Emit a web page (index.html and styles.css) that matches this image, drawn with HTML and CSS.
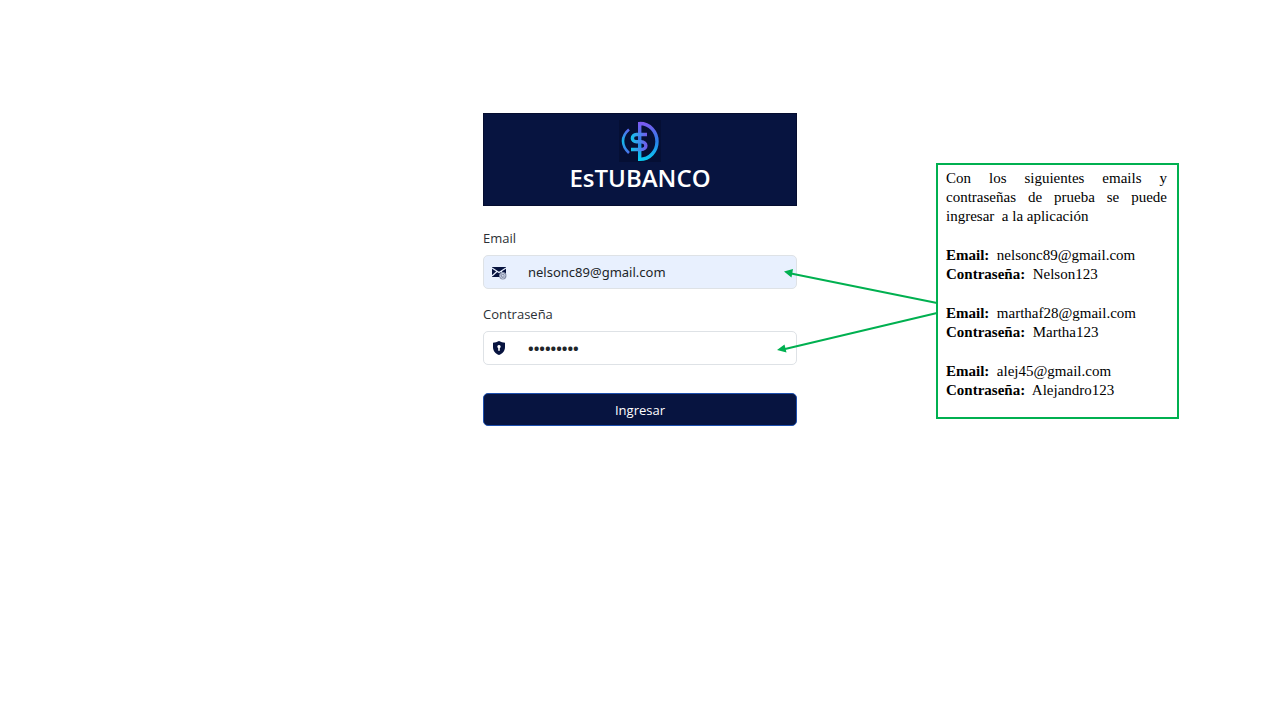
FILE: index.html
```html
<!DOCTYPE html>
<html lang="es">
<head>
<meta charset="utf-8">
<meta name="viewport" content="width=device-width, initial-scale=1">
<title>EsTUBANCO</title>
<link rel="stylesheet" href="styles.css">
</head>
<body>
<main class="page">
  <form class="login">
    <header class="brand">
      <svg class="brand-logo" viewBox="0 0 42 42" aria-hidden="true">
        <defs>
          <linearGradient id="ring" gradientUnits="userSpaceOnUse" x1="0" y1="2" x2="0" y2="41">
            <stop offset="0" stop-color="#8058f0"/>
            <stop offset="0.5" stop-color="#2a80e8"/>
            <stop offset="1" stop-color="#08d0f4"/>
          </linearGradient>
          <linearGradient id="arc" gradientUnits="userSpaceOnUse" x1="0" y1="10" x2="0" y2="33">
            <stop offset="0" stop-color="#5868f0"/>
            <stop offset="0.5" stop-color="#12b8e8"/>
            <stop offset="1" stop-color="#4a70ea"/>
          </linearGradient>
          <linearGradient id="ess" gradientUnits="userSpaceOnUse" x1="12" y1="0" x2="28" y2="0">
            <stop offset="0" stop-color="#10c4ec"/>
            <stop offset="1" stop-color="#7458ec"/>
          </linearGradient>
        </defs>
        <rect width="42" height="42" fill="#050f34"/>
        <g fill="none">
          <path d="M10 9.500Q4 14.500 4 21T10 33" stroke="url(#arc)" stroke-width="2.600"/>
          <path d="M20.700 2V39.400C31 39.400 38 31 38 21.500S31 3.500 20.700 3.500" stroke="url(#ring)" stroke-width="3.400"/>
          <path d="M28 14.500H17.500C12 14.500 12 21.800 17.500 21.800H22C28.500 21.800 28.500 29.500 22 29.500H12" stroke="url(#ess)" stroke-width="3.400"/>
        </g>
      </svg>
      <h1 class="brand-name">EsTUBANCO</h1>
    </header>

    <div class="field">
      <label class="field-label" for="email">Email</label>
      <div class="field-box field-box-filled">
        <svg class="field-icon" viewBox="0 0 16 16" aria-hidden="true">
          <path d="M1 3H15V13H1Z" fill="#07133f"/>
          <path d="M1 4L8 8.500L15 4M1 12L6 7.500M15 12L10 7.500" fill="none" stroke="#e8f0fe" stroke-width="1.200"/>
          <circle cx="11.800" cy="11.800" r="3.700" fill="#8790aa"/>
          <path d="M13.500 13.500A2.400 2.400 0 1 1 14 11C14 13 12.500 12.800 12.800 11.700" fill="none" stroke="#d6deef" stroke-width="0.800"/>
          <circle cx="11.700" cy="11.700" r="0.900" fill="#d6deef"/>
        </svg>
        <input class="field-input" id="email" type="email" value="nelsonc89@gmail.com" autocomplete="off">
      </div>
    </div>

    <div class="field">
      <label class="field-label" for="password">Contraseña</label>
      <div class="field-box">
        <svg class="field-icon" viewBox="0 0 16 16" aria-hidden="true">
          <path d="M8 1C6 2 4 2.600 2 2.800V7C2 11 4.500 13.600 8 15C11.500 13.600 14 11 14 7V2.800C12 2.600 10 2 8 1Z" fill="#07133f"/>
          <path d="M8 5A1.700 1.700 0 0 1 8.800 8.200V10.800H7.200V8.200A1.700 1.700 0 0 1 8 5Z" fill="#fff"/>
        </svg>
        <input class="field-input field-input-password" id="password" type="password" value="Nelson123" autocomplete="off">
      </div>
    </div>

    <button class="submit" type="submit">Ingresar</button>

    <svg class="arrows" viewBox="0 0 160 86" aria-hidden="true">
      <g stroke="#00b050" stroke-width="2">
        <path d="M160 37L14 7.500M160 47L8 83"/>
      </g>
      <path d="M7 5.500L16 3L14.500 11.500ZM0 84L7.500 78.500L9.500 86.500Z" fill="#00b050"/>
    </svg>
  </form>

  <aside class="note">
    <p class="note-intro">Con los siguientes emails y contraseñas de prueba se puede ingresar&nbsp; a la aplicación</p>
    <p class="note-account"><b>Email:</b>&nbsp; nelsonc89@gmail.com<br><b>Contraseña:</b>&nbsp; Nelson123</p>
    <p class="note-account"><b>Email:</b>&nbsp; marthaf28@gmail.com<br><b>Contraseña:</b>&nbsp; Martha123</p>
    <p class="note-account"><b>Email:</b>&nbsp; alej45@gmail.com<br><b>Contraseña:</b>&nbsp; Alejandro123</p>
  </aside>
</main>
</body>
</html>
```
FILE: styles.css
```css
* {
  box-sizing: border-box;
}

body {
  margin: 0;
  background: #fff;
  color: #2b3035;
  font-family: "Open Sans", "Noto Sans", sans-serif;
  font-size: 13px;
}

.page {
  display: grid;
  grid-template-columns: 1fr 314px 1fr;
  align-items: start;
  padding-top: 113px;
}

.login {
  position: relative;
  grid-column: 2;
  display: flex;
  flex-direction: column;
}

.brand {
  display: flex;
  flex-direction: column;
  align-items: center;
  padding: 6px 0 12px;
  margin-bottom: 22px;
  border: 1px solid #050d30;
  background: #071440;
}

.brand-logo {
  width: 42px;
  height: 42px;
}

.brand-name {
  margin: 1px 0 0;
  color: #fff;
  font-size: 24px;
  font-weight: 600;
  line-height: 30px;
}

.field {
  display: flex;
  flex-direction: column;
  gap: 7px;
  margin-bottom: 15px;
}

.field-label {
  line-height: 20px;
}

.field-box {
  display: flex;
  align-items: center;
  height: 34px;
  border: 1px solid #dee2e6;
  border-radius: 5px;
  background: #fff;
}

.field-box-filled {
  background: #e8f0fe;
}

.field-icon {
  flex: none;
  width: 16px;
  height: 16px;
  margin: 0 21px 0 7px;
}

.field-input {
  flex: 1;
  min-width: 0;
  padding: 0;
  border: 0;
  outline: 0;
  background: transparent;
  color: #212529;
  font-family: "Noto Sans", sans-serif;
  font-size: 13px;
}

.field-input-password {
  font-family: "Open Sans", sans-serif;
  font-size: 15px;
  font-weight: 700;
}

.submit {
  height: 33px;
  margin-top: 13px;
  padding: 0;
  border: 1px solid #1d4fae;
  border-radius: 5px;
  background: #071440;
  color: #fff;
  font: inherit;
}

/* Pointers from the note to the two fields */
.arrows {
  position: absolute;
  top: 153px;
  left: 294px;
  width: 160px;
  height: 86px;
  overflow: visible;
  pointer-events: none;
}

.note {
  grid-column: 3;
  justify-self: start;
  width: 243px;
  margin: 50px 0 0 139px;
  padding: 4px 10px 17px 8px;
  border: 2px solid #00b050;
  color: #000;
  font-family: "Liberation Serif", serif;
  font-size: 15px;
  line-height: 19px;
}

.note-intro {
  margin: 0;
  text-align: justify;
}

.note-account {
  margin: 20px 0 0;
}
```
